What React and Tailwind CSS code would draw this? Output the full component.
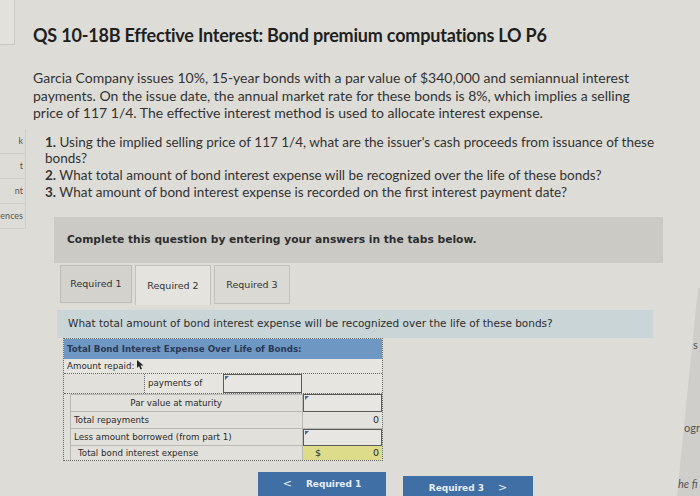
import React from "react";

function Cursor() {
    return (
        <svg width="7" height="10" viewBox="0 0 7 10" className="inline-block ml-[3px] -mt-[2px]">
            <path d="M0 0 L0 8 L2 6 L3.5 9.5 L5 9 L3.5 5.5 L6.5 5.5 Z" fill="#222" />
        </svg>
    );
}

function InputCell({ className = "" }) {
    return (
        <div className={`relative h-full border border-[#5a5a5a] bg-[#e7e6e2] ${className}`}>
            <span className="absolute left-[1px] top-[1px] w-0 h-0 border-t-[4px] border-r-[4px] border-t-[#3b6aa8] border-r-transparent" />
        </div>
    );
}

export default function App() {
    const sideItems = ["k", "t", "nt", "ences"];

    return (
        <div
            className="relative w-[700px] h-[496px] overflow-hidden bg-[#dddcd7] flex"
            style={{ fontFamily: "Lato, 'Open Sans', sans-serif" }}
        >
            {/* left sidebar, mostly cut off */}
            <div className="w-[26px] shrink-0 flex flex-col">
                <div className="w-[15px] h-[45px] border-r border-b border-[#c9c8c3] bg-[#e2e1dc]" />
                <div className="mt-[84px] flex flex-col">
                    {sideItems.map((s) => (
                        <div
                            key={s}
                            className="h-[25px] flex items-center justify-end pr-[2px] border-b border-r border-[#cfcec9] text-[9px] text-[#555] overflow-hidden"
                        >
                            {s}
                        </div>
                    ))}
                </div>
            </div>

            <div className="flex-1 pl-[7px] pt-[23px] text-[#2c2c2c]">
                <h1 className="text-[18px] leading-[24px] font-bold text-[#1f1f1f] tracking-[-0.2px]">
                    QS 10-18B Effective Interest: Bond premium computations LO P6
                </h1>

                <p className="mt-[22px] text-[14px] leading-[17.5px] text-[#333]">
                    Garcia Company issues 10%, 15-year bonds with a par value of $340,000 and semiannual interest
                    <br />
                    payments. On the issue date, the annual market rate for these bonds is 8%, which implies a selling
                    <br />
                    price of 117 1/4. The effective interest method is used to allocate interest expense.
                </p>

                <div className="mt-[12px] ml-[12px] text-[13.5px] leading-[16.7px] text-[#333]">
                    <p>
                        <span className="font-bold">1.</span> Using the implied selling price of 117 1/4, what are the
                        issuer's cash proceeds from issuance of these
                        <br />
                        bonds?
                    </p>
                    <p>
                        <span className="font-bold">2.</span> What total amount of bond interest expense will be
                        recognized over the life of these bonds?
                    </p>
                    <p>
                        <span className="font-bold">3.</span> What amount of bond interest expense is recorded on the
                        first interest payment date?
                    </p>
                </div>

                <div
                    className="mt-[17px] ml-[21px] w-[609px]"
                    style={{ fontFamily: "'DejaVu Sans', Verdana, sans-serif" }}
                >
                    <div className="h-[46px] bg-[#cbcac5] flex items-center pl-[13px]">
                        <span className="text-[10.7px] font-bold text-[#2e2e2e]">
                            Complete this question by entering your answers in the tabs below.
                        </span>
                    </div>

                    <div className="mt-[2px] ml-[6px] flex items-start gap-[3px] h-[45px]">
                        <div className="w-[72px] h-[38px] bg-[#d3d2cd] border border-[#bdbcb7] flex items-center justify-center text-[9.5px] text-[#333]">
                            Required 1
                        </div>
                        <div className="w-[76px] h-[40px] bg-[#e4e3de] border border-[#c2c1bc] border-b-0 flex items-center justify-center text-[9.5px] text-[#333]">
                            Required 2
                        </div>
                        <div className="w-[76px] h-[39px] bg-[#dad9d4] border border-[#c2c1bc] flex items-center justify-center text-[9.5px] text-[#333]">
                            Required 3
                        </div>
                    </div>

                    <div className="ml-[3px] w-[596px] h-[28px] bg-[#c9d5d7] flex items-center pl-[11px] text-[10.5px] text-[#2e2e2e]">
                        What total amount of bond interest expense will be recognized over the life of these bonds?
                    </div>

                    <div className="ml-[9px] w-[320px] border border-dotted border-[#6a6a6a] text-[8.7px] text-[#2a2a2a]">
                        <div className="h-[20px] bg-[#6f97c4] flex items-center pl-[3px] font-bold text-[#2a3a55]">
                            Total Bond Interest Expense Over Life of Bonds:
                        </div>
                        <div className="h-[15px] bg-[#e6e5e0] flex items-center pl-[3px] border-b border-dotted border-[#6a6a6a]">
                            Amount repaid:
                            <Cursor />
                        </div>
                        <div className="h-[20px] flex bg-[#e1e0db] border-b border-dotted border-[#6a6a6a]">
                            <div className="w-[76px] border-r border-dotted border-[#6a6a6a] ml-[5px]" />
                            <div className="w-[78px] flex items-center pl-[3px] bg-[#e6e5e0]">payments of</div>
                            <InputCell className="w-[79px]" />
                            <div className="flex-1 bg-[#e6e5e0]" />
                        </div>
                        <div className="h-[18px] flex bg-[#e1e0db] pl-[6px]">
                            <div className="w-[233px] flex items-center justify-end pr-[80px] border border-[#bab9b4]">
                                Par value at maturity
                            </div>
                            <InputCell className="flex-1" />
                        </div>
                        <div className="h-[17px] flex bg-[#e1e0db] pl-[6px]">
                            <div className="w-[233px] flex items-center pl-[3px] border border-t-0 border-[#bab9b4]">
                                Total repayments
                            </div>
                            <div className="flex-1 flex items-center justify-end pr-[3px] bg-[#e3e2dd] border-b border-[#bab9b4] text-[9.5px]">
                                0
                            </div>
                        </div>
                        <div className="h-[17px] flex bg-[#e1e0db] pl-[6px]">
                            <div className="w-[233px] flex items-center pl-[3px] border border-t-0 border-[#bab9b4]">
                                Less amount borrowed (from part 1)
                            </div>
                            <InputCell className="flex-1" />
                        </div>
                        <div className="h-[14px] flex bg-[#e1e0db] pl-[6px]">
                            <div className="w-[233px] flex items-center pl-[7px] border-x border-[#bab9b4]">
                                Total bond interest expense
                            </div>
                            <div className="flex-1 flex items-center justify-between px-[3px] bg-[#dcdc8a] text-[9.5px]">
                                <span className="pl-[9px]">$</span>
                                <span>0</span>
                            </div>
                        </div>
                    </div>

                    <div className="mt-[11px] ml-[204px] flex gap-[17px] text-[9px] font-bold text-[#e8eef6]">
                        <div className="w-[128px] h-[24px] bg-[#3f6fa4] flex items-center justify-center gap-[14px]">
                            <span className="text-[11px] font-normal">&lt;</span>
                            <span>Required 1</span>
                        </div>
                        <div className="w-[130px] h-[24px] mt-[4px] bg-[#3f6fa4] flex items-center justify-center gap-[14px]">
                            <span>Required 3</span>
                            <span className="text-[11px] font-normal">&gt;</span>
                        </div>
                    </div>
                </div>
            </div>

            {/* next page edge seen at right */}
            <div className="absolute right-0 top-0 w-[24px] h-full bg-[#cfceca] [clip-path:polygon(22px_288px,24px_288px,24px_496px,1px_496px)] text-[11px] text-[#555]">
                <span className="absolute left-[17px] top-[337px]">s</span>
                <span className="absolute left-[8px] top-[420px]">ogr</span>
                <span className="absolute left-[2px] top-[476px] italic">he fi</span>
            </div>
        </div>
    );
}
